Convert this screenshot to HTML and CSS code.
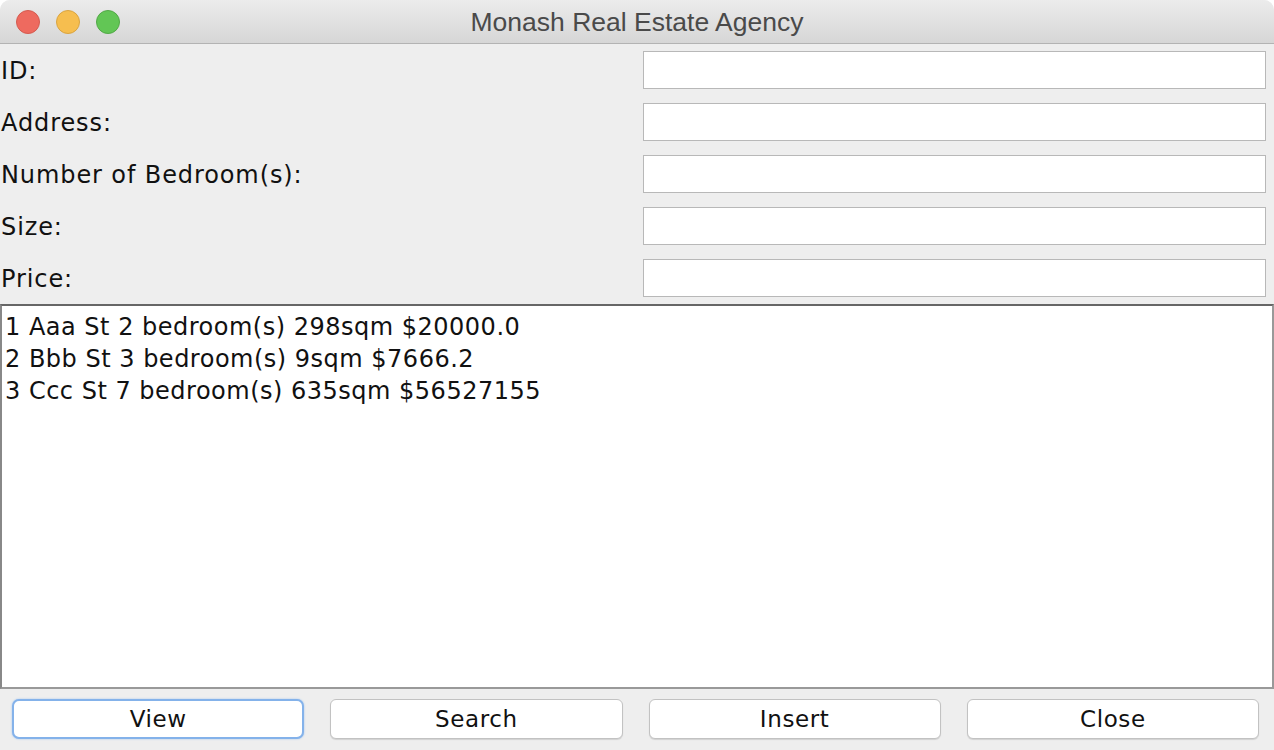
FILE: index.html
```html
<!DOCTYPE html>
<html>
<head>
<meta charset="utf-8">
<link rel="stylesheet" href="styles.css">
<title>Monash Real Estate Agency</title>
</head>
<body>
<div class="window">
  <div class="titlebar">
    <div class="lights">
      <span class="light red"></span>
      <span class="light yellow"></span>
      <span class="light green"></span>
    </div>
    <div class="title">Monash Real Estate Agency</div>
  </div>
  <div class="content">
    <div class="form">
      <div class="row"><label class="label">ID:</label><div class="field"></div></div>
      <div class="row"><label class="label">Address:</label><div class="field"></div></div>
      <div class="row"><label class="label">Number of Bedroom(s):</label><div class="field"></div></div>
      <div class="row"><label class="label">Size:</label><div class="field"></div></div>
      <div class="row"><label class="label">Price:</label><div class="field"></div></div>
    </div>
    <div class="list">
      <div class="line">1 Aaa St 2 bedroom(s) 298sqm $20000.0</div>
      <div class="line">2 Bbb St 3 bedroom(s) 9sqm $7666.2</div>
      <div class="line">3 Ccc St 7 bedroom(s) 635sqm $56527155</div>
    </div>
    <div class="buttons">
      <button class="btn focused">View</button>
      <button class="btn">Search</button>
      <button class="btn">Insert</button>
      <button class="btn">Close</button>
    </div>
  </div>
</div>
</body>
</html>
```
FILE: styles.css
```css
html, body {
  margin: 0;
  padding: 0;
  background: #ffffff;
}
.window {
  width: 1274px;
  height: 750px;
  display: flex;
  flex-direction: column;
  background: #eeeeee;
  border-radius: 10px 10px 0 0;
  overflow: hidden;
  font-family: "DejaVu Sans", sans-serif;
}
.titlebar {
  height: 43px;
  flex: 0 0 43px;
  border-bottom: 1px solid #b3b3b3;
  background: linear-gradient(#ececec, #d6d6d6);
  display: flex;
  align-items: center;
  position: relative;
}
.lights {
  display: flex;
  gap: 16px;
  padding-left: 16px;
}
.light {
  width: 22px;
  height: 22px;
  border-radius: 50%;
  border: 1px solid;
}
.red { background: #ee6a5f; border-color: #d45b50; }
.yellow { background: #f6be4f; border-color: #d9a441; }
.green { background: #62c655; border-color: #52a847; }
.title {
  position: absolute;
  left: 0;
  right: 0;
  top: 1px;
  bottom: 0;
  display: flex;
  align-items: center;
  justify-content: center;
  font-family: "Liberation Sans", sans-serif;
  font-size: 26.5px;
  color: #4a4a4a;
}
.content {
  flex: 1;
  display: flex;
  flex-direction: column;
}
.row {
  height: 52px;
  display: flex;
  align-items: flex-start;
}
.label {
  flex: 1;
  padding-left: 1px;
  padding-top: 13px;
  font-size: 24px;
  line-height: 28px;
  letter-spacing: 0.9px;
  color: #111;
}
.field {
  width: 621px;
  height: 36px;
  margin-top: 7px;
  margin-right: 8px;
  background: #fff;
  border: 1px solid #b8b8b8;
}
.list {
  box-sizing: border-box;
  height: 385px;
  flex: 0 0 385px;
  background: #fff;
  border: 2px solid #999;
  border-top-color: #666;
  border-left-color: #888;
  padding: 5px 3px;
  font-size: 24px;
  letter-spacing: 0.5px;
  color: #111;
}
.line {
  height: 32px;
  line-height: 32px;
}
.buttons {
  flex: 1;
  display: grid;
  grid-template-columns: repeat(4, 1fr);
  column-gap: 26px;
  padding: 10px 15px 0 12px;
  align-items: start;
}
.btn {
  height: 40px;
  background: #fff;
  border: 1px solid #c2c2c2;
  border-radius: 6px;
  box-shadow: 0 1px 1px rgba(0,0,0,0.12);
  font-family: "DejaVu Sans", sans-serif;
  font-size: 23px;
  letter-spacing: 0.6px;
  color: #111;
  padding: 0;
}
.btn.focused {
  border: 2px solid #84b2ea;
  border-radius: 7px;
  box-shadow: 0 0 2px #9cc2f0;
}
```
